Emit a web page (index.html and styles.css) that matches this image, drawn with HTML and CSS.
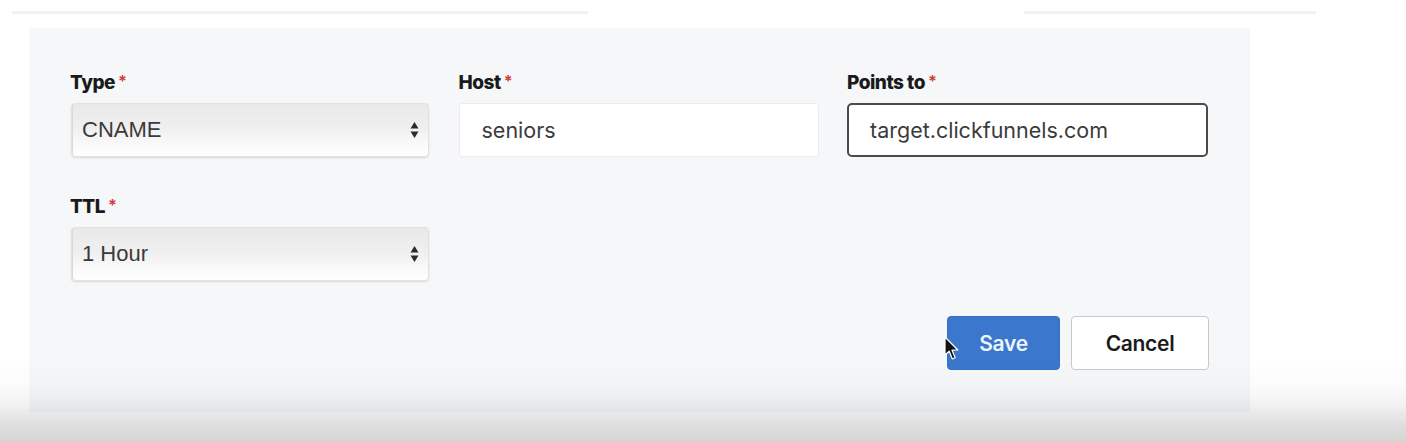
FILE: index.html
```html
<!DOCTYPE html>
<html lang="en">
<head>
<meta charset="utf-8">
<title>DNS record</title>
<link rel="stylesheet" href="styles.css">
</head>
<body>
<div class="toplines">
  <div class="line line-left"></div>
  <div class="line line-right"></div>
</div>
<div class="panel">
  <form class="form">
    <div class="grid">
      <div class="field">
        <label class="label">Type<span class="req">*</span></label>
        <div class="select">
          <span class="select-text">CNAME</span>
          <svg class="arrows" width="9" height="18" viewBox="0 0 9 18"><path d="M4.5 1 L8.5 7.5 L0.5 7.5 Z" fill="#2b2b2b"/><path d="M4.5 17 L8.5 10.5 L0.5 10.5 Z" fill="#2b2b2b"/></svg>
        </div>
      </div>
      <div class="field">
        <label class="label">Host<span class="req">*</span></label>
        <div class="input">seniors</div>
      </div>
      <div class="field">
        <label class="label">Points to<span class="req">*</span></label>
        <div class="input input-focus">target.clickfunnels.com</div>
      </div>
      <div class="field field-row2">
        <label class="label">TTL<span class="req">*</span></label>
        <div class="select">
          <span class="select-text">1 Hour</span>
          <svg class="arrows" width="9" height="18" viewBox="0 0 9 18"><path d="M4.5 1 L8.5 7.5 L0.5 7.5 Z" fill="#2b2b2b"/><path d="M4.5 17 L8.5 10.5 L0.5 10.5 Z" fill="#2b2b2b"/></svg>
        </div>
      </div>
    </div>
    <div class="actions">
      <button type="button" class="btn btn-save">Save
        <svg class="cursor" width="16" height="25" viewBox="0 0 16 25"><path d="M1 1 L1 19 L5.2 15.2 L8.4 23 L11.2 21.8 L8 14.2 L13.8 14 Z" fill="#111" stroke="#fff" stroke-width="1.2" stroke-linejoin="round"/></svg>
      </button>
      <button type="button" class="btn btn-cancel">Cancel</button>
    </div>
  </form>
</div>
<div class="vignette"></div>
</body>
</html>
```

FILE: styles.css
```css
html, body {
  margin: 0;
  padding: 0;
  background: #ffffff;
  height: 100%;
  overflow: hidden;
}

body {
  font-family: Inter, "Liberation Sans", Arial, sans-serif;
  color: #1b1b1b;
}

.toplines {
  display: flex;
  justify-content: space-between;
  padding: 11px 90px 0 12px;
  height: 17px;
}

.line {
  height: 3px;
  background: #f1f2f2;
}

.line-left { width: 576px; }
.line-right { width: 292px; }

.panel {
  margin-left: 29px;
  width: 1221px;
  height: 384px;
  background: #f5f7f8;
  box-sizing: border-box;
  padding: 42px 41px 0 41px;
}

.grid {
  display: grid;
  grid-template-columns: 360px 360px 361px;
  column-gap: 28.5px;
  row-gap: 37px;
}

.field {
  display: flex;
  flex-direction: column;
}

.label {
  font-weight: 800;
  font-size: 19px;
  line-height: 22px;
  letter-spacing: -0.5px;
  color: #1a1a1a;
  margin-bottom: 9px;
}

.req {
  color: #d23b3b;
  margin-left: 3px;
  font-size: 16px;
  font-weight: 700;
  vertical-align: 2px;
}

.select {
  box-sizing: border-box;
  height: 54px;
  width: 358px;
  margin-left: 1px;
  display: flex;
  align-items: center;
  justify-content: space-between;
  padding: 0 9px 0 10px;
  border-radius: 4px;
  border: 1px solid #e2e2e2;
  background: linear-gradient(#e9e9e9 0%, #efefef 45%, #f7f7f7 70%, #ffffff 100%);
  box-shadow: 0 1px 2px rgba(0,0,0,0.12), inset 1px 0 0 #d9d9d9;
}

.select-text {
  font-family: "Liberation Sans", Arial, sans-serif;
  font-size: 22px;
  color: #3a3a3a;
}

.input {
  box-sizing: border-box;
  height: 54px;
  display: flex;
  align-items: center;
  padding-left: 22px;
  background: #ffffff;
  border: 1px solid #ececec;
  border-radius: 3px;
  font-size: 21.5px;
  color: #3b3b3b;
}

.input-focus {
  border: 2px solid #4a4a4a;
  border-radius: 5px;
  padding-left: 21px;
}

.actions {
  display: flex;
  justify-content: flex-end;
  gap: 11px;
  margin-top: 35px;
}

.btn {
  height: 54px;
  border-radius: 4px;
  font-family: Inter, "Liberation Sans", Arial, sans-serif;
  font-size: 21px;
  font-weight: 600;
  letter-spacing: -0.3px;
  cursor: pointer;
  position: relative;
}

.btn-save {
  width: 113px;
  background: #3b77cd;
  color: #eef4fc;
  border: 1px solid #3570c4;
}

.btn-cancel {
  width: 138px;
  background: #ffffff;
  color: #1b1b1b;
  border: 1px solid #c9c9c9;
}

.cursor {
  position: absolute;
  left: -4px;
  top: 19px;
}

.vignette {
  position: fixed;
  left: 0;
  right: 0;
  bottom: 0;
  height: 84px;
  pointer-events: none;
  background: linear-gradient(rgba(0,0,0,0) 0%, rgba(0,0,0,0.015) 35%, rgba(0,0,0,0.05) 55%, rgba(0,0,0,0.12) 78%, rgba(0,0,0,0.17) 100%);
}
```
